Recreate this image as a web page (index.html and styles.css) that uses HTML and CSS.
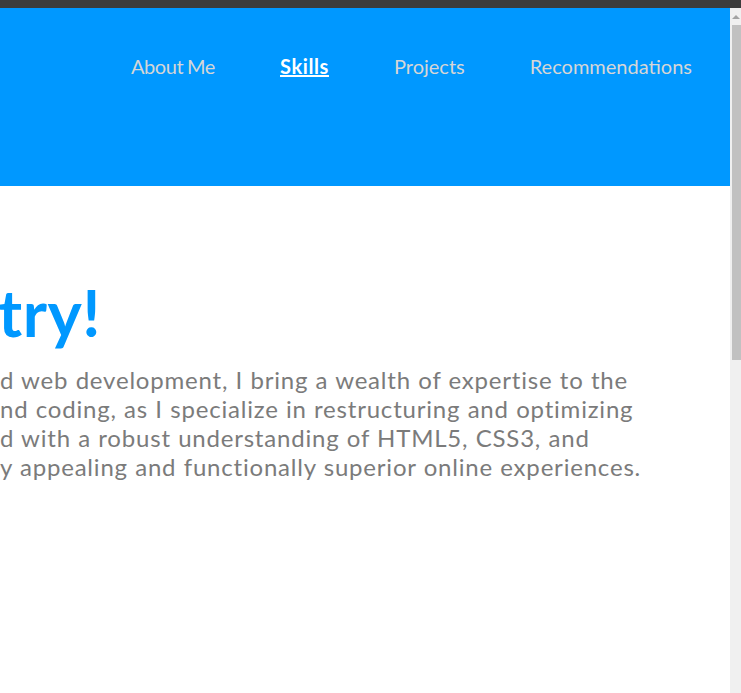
FILE: index.html
```html
<!DOCTYPE html>
<html lang="en">
<head>
<meta charset="utf-8">
<title>Skills</title>
<link rel="stylesheet" href="styles.css">
</head>
<body>
<div class="topbar"></div>
<div class="window">
  <div class="viewport">
    <header class="header">
      <nav class="nav">
        <a class="nav-link" href="#about">About Me</a>
        <a class="nav-link active" href="#skills">Skills</a>
        <a class="nav-link" href="#projects">Projects</a>
        <a class="nav-link" href="#recommendations">Recommendations</a>
      </nav>
    </header>
    <main class="content">
      <h1 class="title">try!</h1>
      <p class="intro">
        <span class="line">d web development, I bring a wealth of expertise to the</span>
        <span class="line">nd coding, as I specialize in restructuring and optimizing</span>
        <span class="line">d with a robust understanding of HTML5, CSS3, and</span>
        <span class="line">y appealing and functionally superior online experiences.</span>
      </p>
    </main>
  </div>
  <div class="scrollbar">
    <div class="arrow"></div>
    <div class="thumb"></div>
  </div>
</div>
</body>
</html>
```
FILE: styles.css
```css
html, body {
  margin: 0;
  padding: 0;
  height: 693px;
  overflow: hidden;
  background: #ffffff;
  font-family: "Lato", "Open Sans", sans-serif;
}
.topbar {
  height: 8px;
  background: #3c3c3c;
}
.window {
  display: flex;
  height: 685px;
}
.viewport {
  flex: 1;
  overflow: hidden;
}
.header {
  height: 178px;
  background: #0098ff;
}
.nav {
  display: flex;
  justify-content: flex-end;
  gap: 65px;
  padding: 45px 38px 0 0;
}
.nav-link {
  color: #d6d6d6;
  text-decoration: none;
  font-size: 20px;
  line-height: 26px;
}
.nav-link.about {
  letter-spacing: -0.4px;
}
.nav-link:first-child {
  letter-spacing: -0.4px;
  word-spacing: -1px;
}
.nav-link.active {
  color: #ffffff;
  font-weight: bold;
  text-decoration: underline;
  letter-spacing: 0.6px;
}
.content {
  padding-top: 88px;
}
.title {
  margin: 0;
  margin-left: -2px;
  color: #0098ff;
  font-size: 65px;
  font-weight: bold;
  line-height: 76px;
  letter-spacing: 0.5px;
}
.intro {
  margin: 15px 0 0 0;
  color: #7b7b7b;
  font-size: 24px;
  line-height: 29px;
  letter-spacing: 0.8px;
  word-spacing: 0.4px;
}
.line {
  display: block;
  white-space: nowrap;
}
.scrollbar {
  width: 11px;
  background: #f0f0f0;
  display: flex;
  flex-direction: column;
  align-items: flex-end;
}
.arrow {
  margin: 7px 1px 0 0;
  width: 0;
  height: 0;
  border-left: 4px solid transparent;
  border-right: 4px solid transparent;
  border-bottom: 4px solid #a3a3a3;
}
.thumb {
  margin-top: 6px;
  width: 9px;
  height: 335px;
  background: #c1c1c1;
}
```
